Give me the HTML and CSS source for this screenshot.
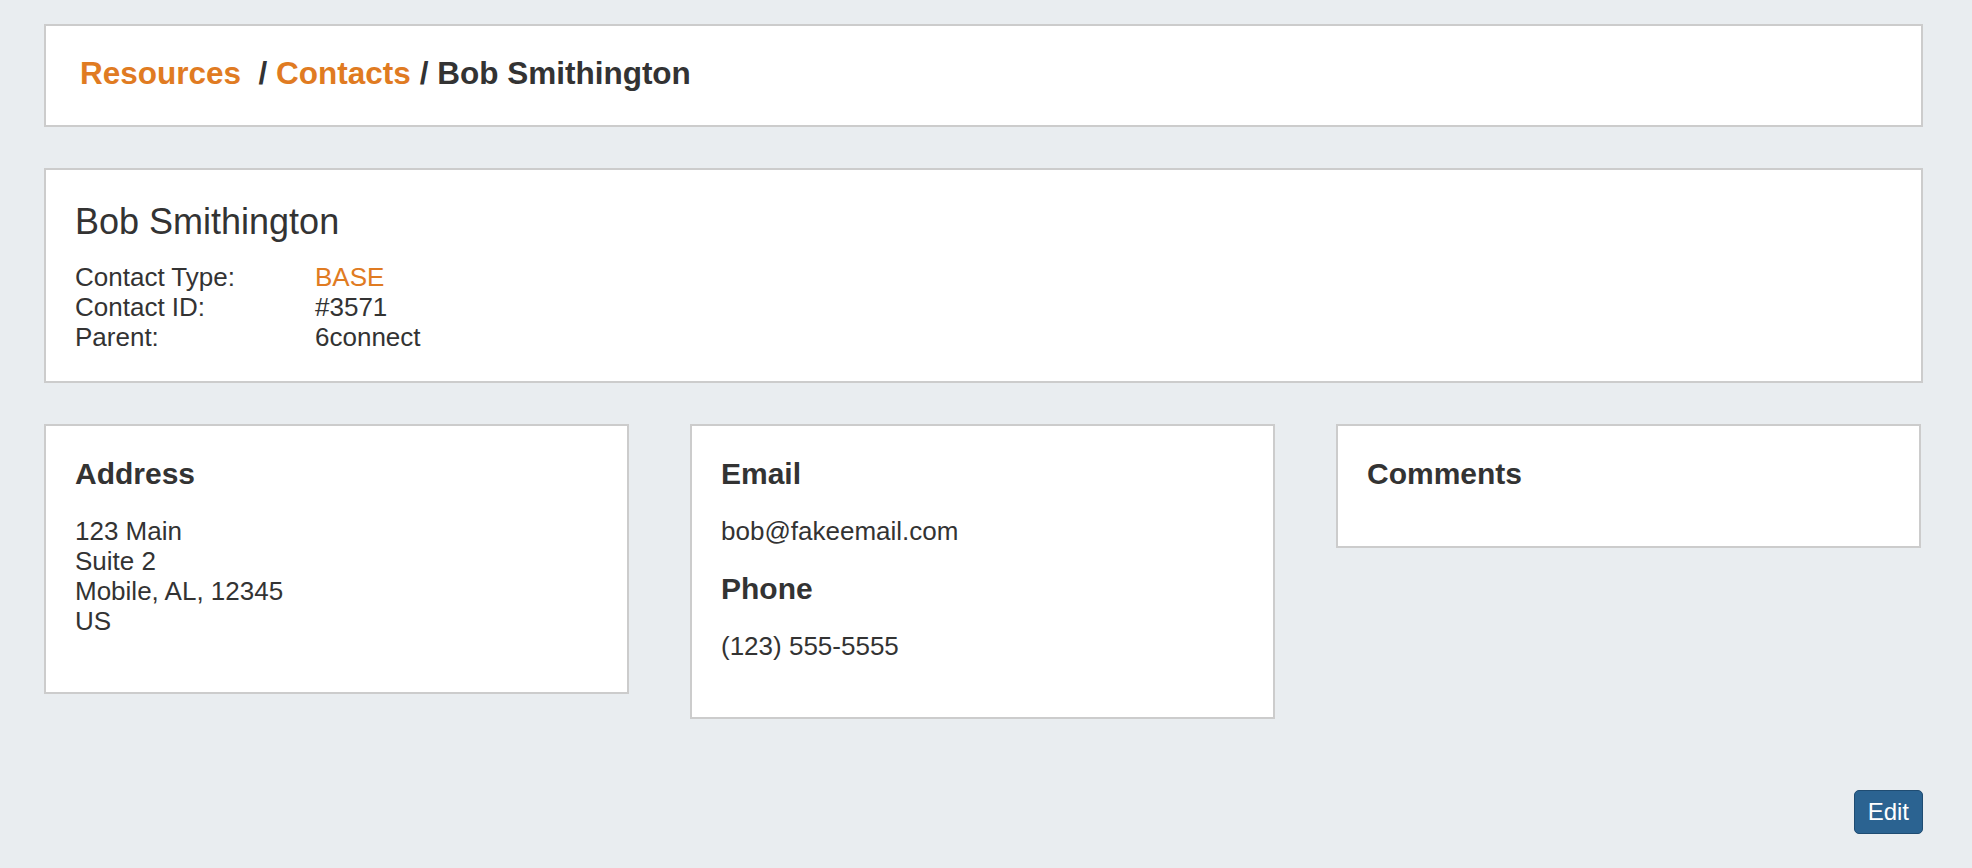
FILE: index.html
```html
<!DOCTYPE html>
<html lang="en">
<head>
<meta charset="utf-8">
<title>Bob Smithington</title>
<link rel="stylesheet" href="styles.css">
</head>
<body>
<div class="page">
  <div class="panel crumbs">
    <a class="crumb-link" href="#">Resources</a>&nbsp; / <a class="crumb-link" href="#">Contacts</a> / <span class="crumb-current">Bob Smithington</span>
  </div>

  <div class="panel summary">
    <h1 class="name">Bob Smithington</h1>
    <div class="fields">
      <div class="label">Contact Type:</div><div class="value accent">BASE</div>
      <div class="label">Contact ID:</div><div class="value">#3571</div>
      <div class="label">Parent:</div><div class="value">6connect</div>
    </div>
  </div>

  <div class="cards">
    <div class="panel card">
      <h4 class="card-title">Address</h4>
      <p class="card-text">123 Main<br>Suite 2<br>Mobile, AL, 12345<br>US</p>
    </div>
    <div class="panel card">
      <h4 class="card-title">Email</h4>
      <p class="card-text">bob@fakeemail.com</p>
      <h4 class="card-title">Phone</h4>
      <p class="card-text">(123) 555-5555</p>
    </div>
    <div class="panel card">
      <h4 class="card-title">Comments</h4>
    </div>
  </div>

  <div class="actions">
    <button class="btn-edit" type="button">Edit</button>
  </div>
</div>
</body>
</html>
```

FILE: styles.css
```css
html, body {
  margin: 0;
  padding: 0;
}

body {
  background: #e9edf0;
  color: #333333;
  font-family: "Liberation Sans", Arial, Helvetica, sans-serif;
  font-size: 26px;
  line-height: 30px;
}

.page {
  padding: 24px 49px 0 44px;
}

.panel {
  background: #ffffff;
  border: 2px solid #cccccc;
  box-sizing: border-box;
}

.crumbs {
  padding: 29px 34px 34px 34px;
  font-size: 31.5px;
  line-height: 36px;
  font-weight: bold;
  color: #333333;
}

.crumb-link {
  color: #e07b22;
  text-decoration: none;
}

.summary {
  margin-top: 41px;
  padding: 33px 29px 29px 29px;
}

.name {
  margin: 0 0 21px 0;
  font-size: 36px;
  line-height: 38px;
  font-weight: normal;
  color: #333333;
}

.fields {
  display: grid;
  grid-template-columns: 240px auto;
}

.accent {
  color: #e07b22;
}

.cards {
  margin-top: 41px;
  margin-right: 2px;
  display: grid;
  grid-template-columns: repeat(3, 1fr);
  column-gap: 61px;
  align-items: start;
}

.card {
  padding: 31px 29px 30px 29px;
}

.card-title {
  margin: 0 0 26px 0;
  font-size: 30px;
  line-height: 33px;
  font-weight: bold;
  color: #333333;
}

.card-text {
  margin: 0 0 26px 0;
}

.actions {
  display: flex;
  justify-content: flex-end;
  margin-top: 71px;
}

.btn-edit {
  font-family: "Liberation Sans", Arial, Helvetica, sans-serif;
  font-size: 24px;
  line-height: 27px;
  color: #ffffff;
  background: #2b6391;
  border: 1px solid #1f4c72;
  border-radius: 5px;
  padding: 7px 13px 8px;
  cursor: pointer;
}
```
